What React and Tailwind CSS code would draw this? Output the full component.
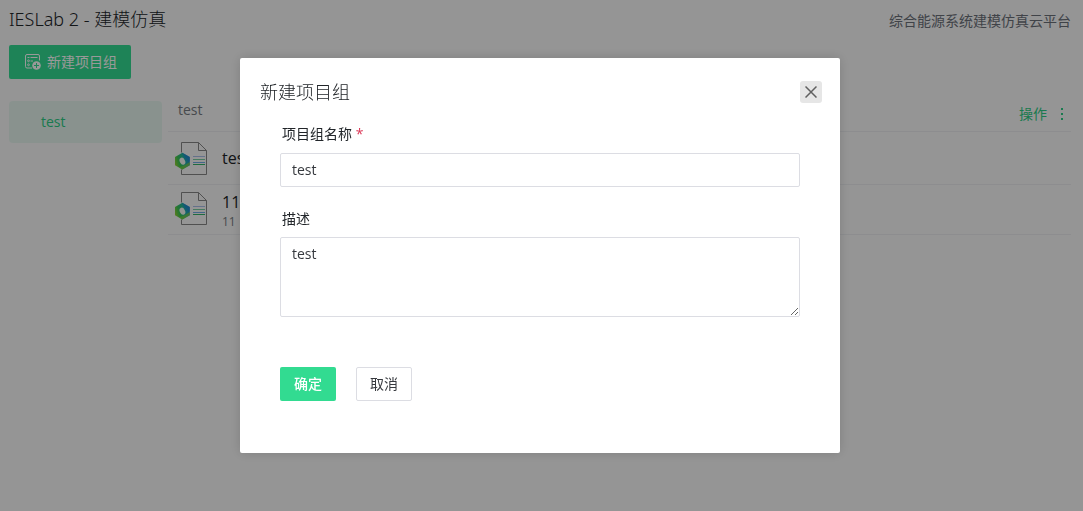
import React from 'react';

function AddListIcon() {
  return (
    <svg className="size-4" viewBox="0 0 16 16" fill="none" stroke="#fff" aria-hidden="true">
      <path d="M14.5 6.5V2A1.5 1.5 0 0 0 13 .5H2A1.5 1.5 0 0 0 .5 2v10.5A1.5 1.5 0 0 0 2 14h5" />
      <path d="M5.5 3.5H12.5M5.5 7H8" />
      <path d="M2.5 3.5h2" />
      <circle cx="3.5" cy="6.8" r=".9" />
      <circle cx="3.5" cy="10.8" r=".9" />
      <circle cx="11.5" cy="11.5" r="4.3" fill="#fff" stroke="none" />
      <path d="M11.5 9v5M9 11.5h5" stroke="#32db91" />
    </svg>
  );
}

function ProjectIcon({ id }) {
  return (
    <svg className="size-[34px] shrink-0" viewBox="0 0 34 34" fill="none" aria-hidden="true">
      <defs>
        <linearGradient id={id} x1="0" y1="0.65" x2="1" y2="0.3">
          <stop offset="0" stopColor="#8fd034" />
          <stop offset="0.3" stopColor="#35c458" />
          <stop offset="0.6" stopColor="#22b4a0" />
          <stop offset="1" stopColor="#1f86cc" />
        </linearGradient>
      </defs>
      <path d="M7.5 11.5v-10h17l8 8v24h-25v-5M24.5 1.5v8h8" stroke="#858585" />
      <path d="M8.4 11.8l7.4 4.1v8.4l-7.4 4.2L1 24.3v-8.4z" fill={`url(#${id})`} />
      <path d="M8.4 11.8l7.4 4.1v4.6l-4.4-2.6z" fill="#2288d2" opacity="0.6" />
      <path d="M15.8 21v3.3l-7.4 4.2-3.5-2 6-2.5z" fill="#8bcf35" opacity="0.65" />
      <ellipse cx="8.4" cy="20.2" rx="2.6" ry="3.7" transform="rotate(-28 8.4 20.2)" fill="#f3f8f3" />
      <path d="M19 15.5h12" stroke="#a9bfe8" />
      <path d="M19 18.5h12" stroke="#77cda1" />
      <path d="M19 21.5h12" stroke="#6eabe5" />
      <path d="M19 23.5h12" stroke="#32b36b" />
    </svg>
  );
}

const projects = [
  { id: 'project-a', name: 'test', note: '' },
  { id: 'project-b', name: '11', note: '11' },
];

function ProjectPage() {
  return (
    <div className="min-h-screen bg-[#f8f8f8] px-[9px] pt-[7px]">
      <header className="flex items-center justify-between pr-[3px]">
        <h1 className="font-['Noto_Sans','Noto_Sans_CJK_SC',sans-serif] text-lg font-light leading-6 text-[#212529]">IESLab 2 - 建模仿真</h1>
        <p className="pt-1 leading-5 text-[#6b7078]">综合能源系统建模仿真云平台</p>
      </header>
      <button type="button" className="mt-[14px] flex h-[34px] items-center gap-1.5 rounded-xs bg-[#32db91] pl-4 pr-3.5 text-white">
        <AddListIcon />
        新建项目组
      </button>
      <div className="mt-[22px] flex gap-1.5 pr-[3px]">
        <nav className="w-[153px] shrink-0">
          <a href="#test" className="block h-[42px] rounded-sm bg-[#e5f4ed] pl-8 leading-[42px] text-[#2ccb84]">test</a>
        </nav>
        <main className="min-w-0 flex-1">
          <div className="flex h-[31px] items-start justify-between border-b border-[#ebecef] pl-2.5 pr-1">
            <h2 className="leading-[18px] text-[#777c82]">test</h2>
            <button type="button" className="mt-[3px] flex items-center gap-2 leading-5 text-[#2ccb84]">
              操作
              <svg className="h-4 w-3" viewBox="0 0 12 16" fill="currentColor" aria-hidden="true">
                <path d="M6 2h2v2H6zM6 7h2v2H6zM6 12h2v2H6z" />
              </svg>
            </button>
          </div>
          <ul>
            {projects.map((project) => (
              <li key={project.id} className="flex h-[50px] items-start gap-3.5 border-b border-[#ebecef] pl-1.5 pt-1.5 first:h-[53px] first:pt-[9px]">
                <ProjectIcon id={project.id} />
                <div className="flex min-h-[34px] flex-col justify-center">
                  <p className="text-base leading-[22px] text-[#202327]">{project.name}</p>
                  {project.note && <p className="text-xs leading-[18px] text-[#777c82]">{project.note}</p>}
                </div>
              </li>
            ))}
          </ul>
        </main>
      </div>
    </div>
  );
}

function GroupDialog() {
  return (
    <div className="fixed inset-0 flex items-center justify-center bg-black/40 pr-[3px]">
      <section role="dialog" aria-modal="true" aria-labelledby="dialog-title" className="w-full max-w-[600px] rounded-xs bg-white shadow-[0_0_12px_rgba(0,0,0,0.15)]">
        <header className="flex items-center justify-between pl-5 pr-[18px] pt-[22px]">
          <h2 id="dialog-title" className="text-lg font-light leading-6 text-[#212529]">新建项目组</h2>
          <button type="button" aria-label="关闭" className="flex size-[22px] items-center justify-center rounded-[3px] bg-[#e6e6e6] text-[#606060]">
            <svg className="size-3" viewBox="0 0 12 12" fill="none" stroke="currentColor" strokeWidth="1.5" aria-hidden="true">
              <path d="M.5.5l11 11M11.5.5L.5 11.5" />
            </svg>
          </button>
        </header>
        <form className="px-10 pb-[52px] pt-5" onSubmit={(event) => event.preventDefault()}>
          <label htmlFor="group-name" className="block pl-0.5 leading-5 text-[#212529]">
            项目组名称 <span className="text-[#dc3958]">*</span>
          </label>
          <input id="group-name" type="text" defaultValue="test" className="mt-[9px] block h-[34px] w-full rounded-xs border border-[#dcdde3] bg-white px-[11px] pb-0.5 text-[#36393e] outline-none" />
          <label htmlFor="group-note" className="mt-[22px] block pl-0.5 leading-5 text-[#212529]">描述</label>
          <textarea id="group-note" defaultValue="test" className="mt-2 block h-20 w-full resize rounded-xs border border-[#dcdde3] bg-white px-[11px] py-1.5 leading-5 text-[#36393e] outline-none" />
          <div className="mt-[50px] flex gap-5">
            <button type="submit" className="h-[34px] w-14 rounded-xs bg-[#32db91] font-medium text-white">确定</button>
            <button type="button" className="h-[34px] w-14 rounded-xs border border-[#dcdde3] bg-white text-[#36393e]">取消</button>
          </div>
        </form>
      </section>
    </div>
  );
}

export default function App() {
  return (
    <div className="font-['Open_Sans','Noto_Sans_CJK_SC',sans-serif] text-sm">
      <ProjectPage />
      <GroupDialog />
    </div>
  );
}
